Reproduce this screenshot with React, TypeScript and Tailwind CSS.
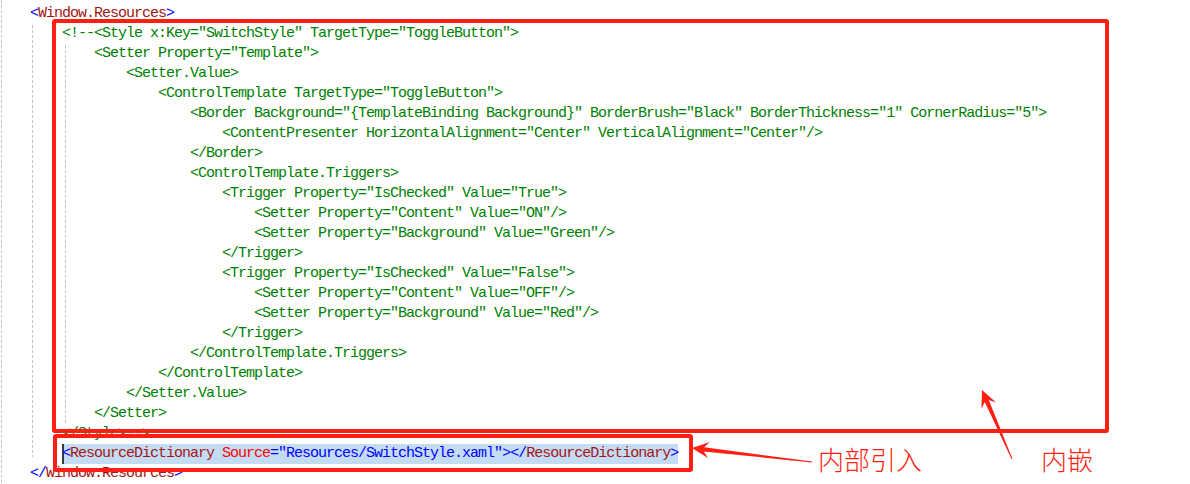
import React from "react";

type Seg = { t: string; c: string };

const G = "text-[#008000]";
const B = "text-[#0000ff]";
const DR = "text-[#a31515]";
const R = "text-[#ff0000]";

const comment: [number, string][] = [
  [1, '<!--<Style x:Key="SwitchStyle" TargetType="ToggleButton">'],
  [2, '<Setter Property="Template">'],
  [3, "<Setter.Value>"],
  [4, '<ControlTemplate TargetType="ToggleButton">'],
  [5, '<Border Background="{TemplateBinding Background}" BorderBrush="Black" BorderThickness="1" CornerRadius="5">'],
  [6, '<ContentPresenter HorizontalAlignment="Center" VerticalAlignment="Center"/>'],
  [5, "</Border>"],
  [5, "<ControlTemplate.Triggers>"],
  [6, '<Trigger Property="IsChecked" Value="True">'],
  [7, '<Setter Property="Content" Value="ON"/>'],
  [7, '<Setter Property="Background" Value="Green"/>'],
  [6, "</Trigger>"],
  [6, '<Trigger Property="IsChecked" Value="False">'],
  [7, '<Setter Property="Content" Value="OFF"/>'],
  [7, '<Setter Property="Background" Value="Red"/>'],
  [6, "</Trigger>"],
  [5, "</ControlTemplate.Triggers>"],
  [4, "</ControlTemplate>"],
  [3, "</Setter.Value>"],
  [2, "</Setter>"],
  [1, "</Style>-->"],
];

const lines: { level: number; segs: Seg[]; selected?: boolean }[] = [
  {
    level: 0,
    segs: [
      { t: "<", c: B },
      { t: "Window.Resources", c: DR },
      { t: ">", c: B },
    ],
  },
  ...comment.map(([level, t]) => ({ level, segs: [{ t, c: G }] })),
  {
    level: 1,
    selected: true,
    segs: [
      { t: "<", c: B },
      { t: "ResourceDictionary", c: DR },
      { t: " Source", c: R },
      { t: "=", c: B },
      { t: '"Resources/SwitchStyle.xaml"', c: B },
      { t: "></", c: B },
      { t: "ResourceDictionary", c: DR },
      { t: ">", c: B },
    ],
  },
  {
    level: 0,
    segs: [
      { t: "</", c: B },
      { t: "Window.Resources", c: DR },
      { t: ">", c: B },
    ],
  },
];

function arrowPoints(tx: number, ty: number, hx: number, hy: number) {
  const dx = hx - tx;
  const dy = hy - ty;
  const len = Math.hypot(dx, dy);
  const ux = dx / len;
  const uy = dy / len;
  const nx = -uy;
  const ny = ux;
  const headLen = 17;
  const neckBack = 12;
  const barbW = 8;
  const neckW = 2.2;
  const tailW = 0.4;
  const p = (bx: number, by: number, w: number) => [bx + nx * w, by + ny * w, bx - nx * w, by - ny * w];
  const bx = hx - ux * headLen;
  const by = hy - uy * headLen;
  const kx = hx - ux * neckBack;
  const ky = hy - uy * neckBack;
  const [t1x, t1y, t2x, t2y] = p(tx, ty, tailW);
  const [n1x, n1y, n2x, n2y] = p(kx, ky, neckW);
  const [b1x, b1y, b2x, b2y] = p(bx, by, barbW);
  return [
    [t1x, t1y],
    [n1x, n1y],
    [b1x, b1y],
    [hx, hy],
    [b2x, b2y],
    [n2x, n2y],
    [t2x, t2y],
  ]
    .map(([x, y]) => `${x.toFixed(1)},${y.toFixed(1)}`)
    .join(" ");
}

export default function App() {
  return (
    <div className="relative w-[1190px] h-[484px] overflow-hidden bg-white">
      <div className="flex flex-col pt-[4px] pl-[30px] font-['Liberation_Mono',monospace] text-[15px] tracking-[-1px] leading-[20px] whitespace-pre">
        {lines.map((ln, i) => (
          <div key={i} className="h-[20px] flex" style={{ paddingLeft: ln.level * 32 }}>
            <span
              className={
                ln.selected
                  ? "bg-[#c3dcf4] shadow-[inset_2px_0_0_#3a3a3a]"
                  : ""
              }
            >
              {ln.segs.map((s, j) => (
                <span key={j} className={s.c}>
                  {s.t}
                </span>
              ))}
            </span>
          </div>
        ))}
      </div>

      {/* indentation guides */}
      <div className="absolute left-[1px] top-0 w-px h-[484px] bg-[linear-gradient(to_bottom,#c4c4c4_60%,transparent_60%)] bg-[length:1px_5px]" />
      <div className="absolute left-[32px] top-[25px] w-px h-[432px] bg-[linear-gradient(to_bottom,#c4c4c4_60%,transparent_60%)] bg-[length:1px_5px]" />
      <div className="absolute left-[65px] top-[45px] w-px h-[380px] bg-[linear-gradient(to_bottom,#c4c4c4_60%,transparent_60%)] bg-[length:1px_5px]" />

      {/* red annotation boxes */}
      <div className="absolute left-[52px] top-[19px] w-[1057px] h-[414px] border-[4px] border-[#fe1f14] rounded-[3px]" />
      <div className="absolute left-[53px] top-[434px] w-[640px] h-[38px] border-[4px] border-[#fe1f14] rounded-[3px]" />

      <svg className="absolute left-0 top-0" width="1190" height="484" viewBox="0 0 1190 484">
        <polygon points={arrowPoints(812, 462, 692, 448)} fill="#fe1f14" />
        <polygon points={arrowPoints(1012, 459, 982, 390)} fill="#fe1f14" />
      </svg>

      <div className="absolute left-[818px] top-[444px] text-[26px] leading-[30px] text-[#fe1f14] font-['Noto_Sans_CJK_SC',sans-serif] font-light">
        内部引入
      </div>
      <div className="absolute left-[1041px] top-[444px] text-[26px] leading-[30px] text-[#fe1f14] font-['Noto_Sans_CJK_SC',sans-serif] font-light">
        内嵌
      </div>
    </div>
  );
}
